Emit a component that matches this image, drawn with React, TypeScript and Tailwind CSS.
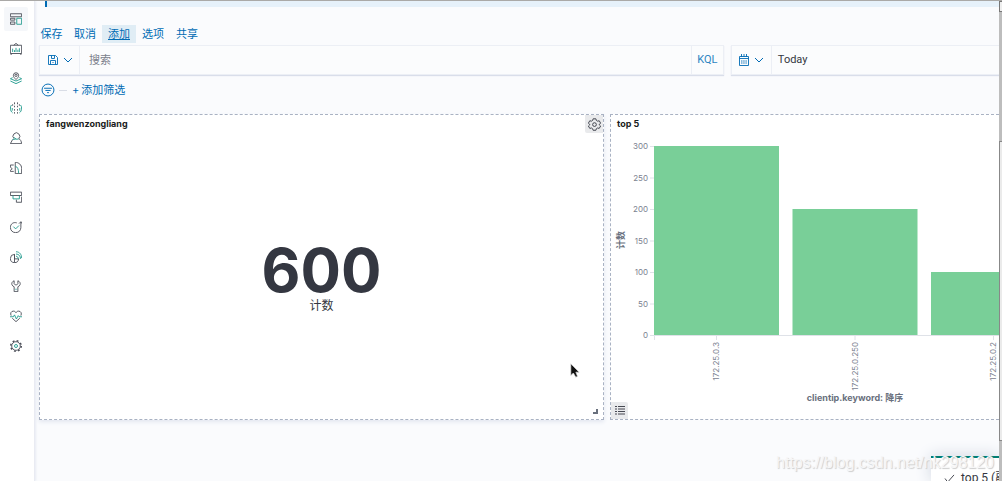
import React from "react";

const INK = "#4a4d57";
const TEAL = "#1f9a8c";

type NavItem = { label: string; ink: string; teal: string; teeth?: boolean };

const navItems: NavItem[] = [
  { label: "Dashboard", ink: "M1 2h30v8H1zM1 14h12v5H1zM1 24h12v6H1z", teal: "M18 14h13v16H18z" },
  { label: "Canvas", ink: "M1 6h30v22H1zM10 6l6-5 6 5M3 28v4M29 28v4", teal: "M7 15v9M12 19v5M16 13v11M21 18v6M25 14v10" },
  { label: "Maps", ink: "M16 20c-5-5-7-7-7-11a7 7 0 0 1 14 0c0 4-2 6-7 11zM16 6a3 3 0 1 0 0 6 3 3 0 0 0 0-6z", teal: "M7 15l-6 3 15 6 15-6-6-3M1 24l15 7 15-7" },
  { label: "Machine Learning", ink: "M12 1v5M20 1v5M12 10v4M20 10v4M7 6v4M25 6v4M12 19v4M20 19v4M12 27v4M20 27v4", teal: "M4 8C2 10 1 13 1 16M28 8c2 2 3 5 3 8M1 16c0 6 2 10 6 13M31 16c0 6-2 10-6 13M6 16v7M26 16v7" },
  { label: "Metrics", ink: "M11 18a9 9 0 1 1 12 0M24 18c4 2 6 6 7 13H1l6-11", teal: "M7 20l7-1h9M11 14l5 5" },
  { label: "Logs", ink: "M10 8H1v6l5 4-5 4v3h9M14 1v30h17V17C31 8 24 1 14 1z", teal: "M14 11c6 2 9 8 9 19" },
  { label: "APM", ink: "M1 3h30v9H1zM17 23v7h14V15", teal: "M8 12v9h17v-9" },
  { label: "Uptime", ink: "M18 5C9 2 1 8 1 17c0 8 6 14 14 14 9 0 14-6 14-14V2M24 7l5-5 3 5", teal: "M9 15l6 6 9-9" },
  { label: "SIEM", ink: "M12 9a11 11 0 1 0 11 12H12zM12 9v22", teal: "M16 14c4 0 6 3 6 7M16 8c8 0 12 6 12 13M16 2c10 0 15 8 15 17" },
  { label: "Dev Tools", ink: "M11 2C6 4 4 8 5 12c1 3 3 5 6 6v13h10V18c3-1 5-3 6-6 1-4-1-8-6-10v8l-3 3h-4l-3-3z", teal: "M16 23v4" },
  { label: "Monitoring", ink: "M3 15C0 9 3 3 9 3c3 0 5 1 7 4 2-3 4-4 7-4 6 0 9 6 6 12M6 22l10 9 10-9", teal: "M0 18h9l3-5 5 11 5-9 2 3h8" },
  {
    label: "Management",
    ink: "M16 4.500a11.500 11.500 0 1 0 0 23 11.500 11.500 0 0 0 0-23z",
    teal: "M16 12a4 4 0 1 0 0 8 4 4 0 0 0 0-8z",
    teeth: true,
  },
];

const menu = ["保存", "取消", "添加", "选项", "共享"];

const bars = [
  { ip: "172.25.0.3", count: 300 },
  { ip: "172.25.0.250", count: 200 },
  { ip: "172.25.0.2", count: 100 },
];

const ticks = [0, 50, 100, 150, 200, 250, 300];

function Chevron() {
  return (
    <svg viewBox="0 0 10 6" className="h-[6px] w-[10px]" fill="none" stroke="currentColor" aria-hidden="true">
      <path d="M1 1l4 4 4-4" />
    </svg>
  );
}

function SaveIcon() {
  return (
    <svg viewBox="0 0 12 12" className="size-[12px]" fill="none" stroke="currentColor" aria-hidden="true">
      <path d="M1.500 1.500h7l2 2v7h-9zM4.500 1.500v3h3v-3M3.500 10.500v-4h5v4" strokeWidth=".9" />
      <path d="M5.500 8.500h1" />
    </svg>
  );
}

function CalendarIcon() {
  return (
    <svg viewBox="0 0 12 12" className="size-[12px]" fill="none" stroke="currentColor" aria-hidden="true">
      <path d="M1.500 2.500h9v9h-9zM1.500 4.500h9M3.500 0v3M6 0v3M8.500 0v3" strokeWidth=".9" />
      <path d="M3 7h6M3 9h6" strokeDasharray="1.500 .7" strokeWidth=".9" />
    </svg>
  );
}

function FilterIcon() {
  return (
    <svg viewBox="0 0 16 16" className="size-[14px]" fill="none" stroke="currentColor" strokeWidth="1.100" aria-hidden="true">
      <circle cx="8" cy="8" r="6.800" />
      <path d="M3.500 6h9M5 8.500h6M7 11h2" />
    </svg>
  );
}

function GearIcon() {
  return (
    <svg viewBox="0 0 16 16" className="size-[13px]" fill="none" stroke="currentColor" strokeWidth="1.100" aria-hidden="true">
      <path d="M6.300 1h3.400l.6 2 1.500.9 2-.5 1.700 2.900L14 7.800v.8l1.500 1.300-1.700 2.900-2-.5-1.500.9-.6 1.900H6.300l-.6-1.900-1.500-.9-2 .5L.5 9.900 2 8.600v-.8L.5 6.300l1.700-2.900 2 .5L5.700 3z" />
      <circle cx="8" cy="8.100" r="2.300" />
    </svg>
  );
}

function ListIcon() {
  return (
    <svg viewBox="0 0 10 9" className="h-[9px] w-[10px]" stroke="currentColor" strokeWidth=".9" aria-hidden="true">
      <path d="M0 .5h2M3 .5h7M0 3h2M3 3h7M0 5.500h2M3 5.500h7M0 8h2M3 8h7" />
    </svg>
  );
}

function Sidebar() {
  return (
    <nav aria-label="Apps" className="flex w-[35px] shrink-0 flex-col border-r border-[#e9ebf2] bg-white pl-1 shadow-[1px_0_2px_#e8ebf3]">
      <ul className="mt-[6px] flex h-[351px] flex-col justify-between">
        {navItems.map((item, i) => (
          <li key={item.label} className="flex">
            <a
              href="#"
              aria-label={item.label}
              className={i === 0 ? "grid size-6 place-items-center rounded-xs bg-[#f5f7fa]" : "grid size-6 place-items-center"}
            >
              <svg viewBox="0 0 32 32" className="size-[12px]" fill="none" strokeWidth="2.400" aria-hidden="true">
                <path d={item.ink} stroke={INK} />
                {item.teeth && <circle cx="16" cy="16" r="14" stroke={INK} strokeWidth="4" strokeDasharray="5 6" />}
                <path d={item.teal} stroke={TEAL} />
              </svg>
            </a>
          </li>
        ))}
      </ul>
    </nav>
  );
}

function BarChart() {
  const y = (value: number) => 202 - value * 0.63;
  return (
    <svg width="565" height="284" role="img" aria-label="top 5" className="block shrink-0" fontFamily="Inter, 'Noto Sans CJK SC', sans-serif">
      {ticks.map((t) => (
        <g key={t}>
          <path d={`M39 ${y(t) + 0.5}h4`} stroke="#dfe2e8" />
          <text x="37" y={y(t) + 3} textAnchor="end" fontSize="8" fill="#7b8290">
            {t}
          </text>
        </g>
      ))}
      {bars.map((b, i) => (
        <g key={b.ip}>
          <rect x={43 + i * 138.5} y={y(b.count)} width="125" height={b.count * 0.63} fill="#79cf98" />
          <path d={`M${105.5 + i * 138.5} 203v4`} stroke="#dfe2e8" />
          <text transform={`translate(${108 + i * 138.5} 209) rotate(-90)`} textAnchor="end" fontSize="8" fill="#7b8290">
            {b.ip}
          </text>
        </g>
      ))}
      <path d="M39 202.500h526M43.500 203v4" stroke="#dfe2e8" />
      <text transform="translate(13 107) rotate(-90)" textAnchor="middle" fontSize="9" fontWeight="700" fill="#69707d">
        计数
      </text>
      <text x="244" y="268" textAnchor="middle" fontSize="9" fontWeight="700" fill="#69707d">
        clientip.keyword: 降序
      </text>
    </svg>
  );
}

const panelClass = "relative flex min-w-0 flex-col overflow-hidden border border-dashed border-[#a9b2c3] bg-white";

export default function App() {
  return (
    <div className="relative flex h-screen overflow-hidden border-t border-[#aaa9a7] bg-[#fafbfd] font-['Inter','Noto_Sans_CJK_SC',sans-serif] text-[#343741]">
      <Sidebar />

      <main className="flex min-w-0 flex-1 flex-col">
        <div className="ml-2.5 h-1.5 shrink-0 border-l-2 border-[#006bb4] bg-[#e6f1fa]" />

        <div className="mt-[18px] flex h-[18px] text-[11px] leading-[18px] text-[#006bb4]">
          {menu.map((m) => (
            <button
              key={m}
              type="button"
              className={m === "添加" ? "w-[34px] bg-[#e0edf5] text-center underline" : "w-[34px] text-center first:w-[33px]"}
            >
              {m}
            </button>
          ))}
        </div>

        <div className="mt-[2px] ml-1 flex gap-[7px] text-[11px]">
          <form className="flex h-[30px] min-w-0 flex-[685] border border-[#eceff5] bg-[#fbfcfd] shadow-[0_1px_1px_#d9deea]">
            <button type="button" aria-label="Saved queries" className="flex w-10 shrink-0 items-center justify-center gap-1 border-r border-[#eceff5] text-[#006bb4]">
              <SaveIcon />
              <Chevron />
            </button>
            <input aria-label="搜索" placeholder="搜索" className="min-w-0 flex-1 px-[9px] outline-none placeholder:text-[#7b818c]" />
            <button type="button" className="w-8 shrink-0 border-l border-[#eceff5] font-['Roboto',sans-serif] text-[#2e85c1]">
              KQL
            </button>
          </form>
          <div className="flex h-[30px] min-w-0 flex-[268] border border-r-0 border-[#eceff5] bg-[#fbfcfd] shadow-[0_1px_1px_#d9deea]">
            <button type="button" aria-label="Quick dates" className="flex w-10 shrink-0 items-center justify-center gap-1 border-r border-[#eceff5] text-[#006bb4]">
              <CalendarIcon />
              <Chevron />
            </button>
            <button type="button" className="flex-1 px-1.5 text-left font-['Roboto',sans-serif]">
              Today
            </button>
          </div>
        </div>

        <div className="mt-2 ml-1 flex h-[14px] items-center gap-1 pl-[2px] text-[11px] leading-[14px] text-[#006bb4]">
          <button type="button" aria-label="Filter options">
            <FilterIcon />
          </button>
          <span className="h-px w-2 bg-[#d9dde6]" />
          <button type="button" className="ml-px flex gap-0.5 whitespace-nowrap">
            <span>+</span>
            <span>添加筛选</span>
          </button>
        </div>

        <div className="mt-[17px] ml-1 grid h-[306px] shrink-0 grid-cols-[565fr_389fr] gap-1.5">
          <section className={`${panelClass} shadow-[0_2px_4px_#e3e7f0]`}>
            <h2 className="h-[18px] pl-1.5 text-[9px] leading-[18px] font-bold text-[#1a1c21]">fangwenzongliang</h2>
            <button type="button" aria-label="Panel options" className="absolute top-0 right-0 grid size-[18px] place-items-center rounded-bl-xs bg-[#e9eaec]">
              <GearIcon />
            </button>
            <div className="flex flex-1 flex-col items-center justify-center pt-1">
              <div className="text-[60px] leading-[56px] font-bold">600</div>
              <div className="text-[12px] leading-[16px]">计数</div>
            </div>
            <span className="absolute right-[5px] bottom-[5px] size-[5px] border-r-2 border-b-2 border-[#69707d]" />
            <svg viewBox="0 0 12 18" className="absolute top-[248px] left-[530px] h-[15px] w-[10px]" aria-hidden="true">
              <path d="M1 1v14l3-3 3 5 2-1-2-5h4z" fill="#111" stroke="#ddd" strokeWidth=".8" />
            </svg>
          </section>

          <section className={`${panelClass} border-r-0`}>
            <h2 className="h-[18px] pl-1.5 text-[9px] leading-[18px] font-bold text-[#1a1c21]">top 5</h2>
            <BarChart />
            <button type="button" aria-label="Toggle legend" className="absolute bottom-0 left-0 grid size-[17px] place-items-center rounded-tr-xs bg-[#e9eaec]">
              <ListIcon />
            </button>
          </section>
        </div>
      </main>

      <div className="z-10 flex w-[3px] shrink-0 flex-col bg-[#bdbdbd]" aria-hidden="true">
        <div className="h-[11px] border border-r-0 border-[#777] bg-[#eee]" />
        <div className="mt-[129px] h-[300px] border border-r-0 border-[#888] bg-[#ebebeb]" />
      </div>

      <div role="status" className="absolute right-[3px] bottom-0 flex h-[25px] w-[68px] items-start gap-1.5 overflow-hidden border-t-2 border-[#017d73] bg-white pt-[12px] pl-[13px] font-['Roboto','Noto_Sans_CJK_SC',sans-serif] text-[12px] leading-[16px] whitespace-nowrap shadow-[0_0_16px_#cfd5e0]">
        <svg viewBox="0 0 12 10" className="mt-[4px] h-[9px] w-[11px] shrink-0" fill="none" stroke="currentColor" aria-hidden="true">
          <path d="M1 5l3 4 7-8" />
        </svg>
        <span>top 5 (副</span>
      </div>
      <div className="pointer-events-none absolute right-[8px] bottom-[8px] font-['Liberation_Sans',sans-serif] text-[16px] leading-[20px] text-[#f6f6f7] [text-shadow:1px_1px_1px_#cccccc]">
        https://blog.csdn.net/nk298120
      </div>
    </div>
  );
}
